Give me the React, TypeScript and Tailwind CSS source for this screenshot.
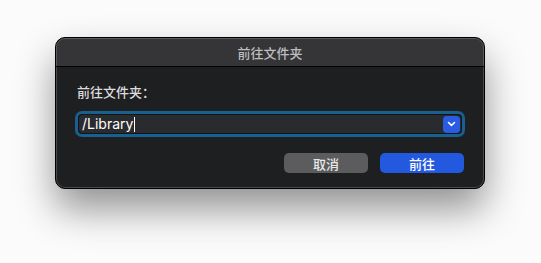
import React from 'react';

const ChevronDown = () => (
  <svg width="9" height="6" viewBox="0 0 9 6" fill="none">
    <path d="M1.5 1.5L4.5 4.3L7.5 1.5" stroke="white" strokeWidth="1.6" strokeLinecap="round" strokeLinejoin="round" />
  </svg>
);

const App: React.FC = () => {
  return (
    <div
      className="w-[541px] h-[263px] bg-[#fbfbfb] pt-[37px] pl-[55px]"
      style={{ fontFamily: '"Noto Sans CJK SC", "Noto Sans", Inter, sans-serif' }}
    >
      <div className="w-[430px] h-[152px] rounded-[10px] border border-black bg-[#1e1f21] shadow-[0_20px_38px_rgba(0,0,0,0.42)] overflow-hidden flex flex-col">
        <div className="rounded-t-[9px] border-t border-x border-[#5a5a5c] bg-[#353538] h-[28px] flex items-center justify-center">
          <span className="text-[13px] font-medium text-[#bdbdbf] leading-none">前往文件夹</span>
        </div>
        <div className="h-px bg-black" />
        <div className="flex-1 border-x border-b border-[#4a4a4c] rounded-b-[9px] px-[18px] pt-[18px] flex flex-col">
          <div className="pl-[2px] text-[13px] font-medium leading-none text-[#dcdcdc]">前往文件夹：</div>
          <div className="mt-[13px] h-[26px] rounded-[7px] border-[3px] border-[#17608f] bg-[#141517] p-px">
            <div className="h-full rounded-[4px] bg-[#2a2b2e] flex items-center pl-[3px] pr-[1px]">
              <span className="text-[14px] leading-none text-white" style={{ fontFamily: 'Inter, "Noto Sans", sans-serif' }}>/Library</span>
              <span className="ml-[1px] w-px h-[15px] bg-white" />
              <div className="ml-auto w-[17px] h-[17px] rounded-[4px] bg-[#2a5be3] flex items-center justify-center">
                <ChevronDown />
              </div>
            </div>
          </div>
          <div className="mt-[16px] flex justify-end gap-[12px] pr-px">
            <button className="w-[84px] h-[20px] rounded-[5px] bg-[#5c5c5e] text-[13px] font-medium leading-none text-[#e8e8e8]">取消</button>
            <button className="w-[84px] h-[20px] rounded-[5px] bg-[#2259de] text-[13px] font-medium leading-none text-white">前往</button>
          </div>
        </div>
      </div>
    </div>
  );
};

export default App;
